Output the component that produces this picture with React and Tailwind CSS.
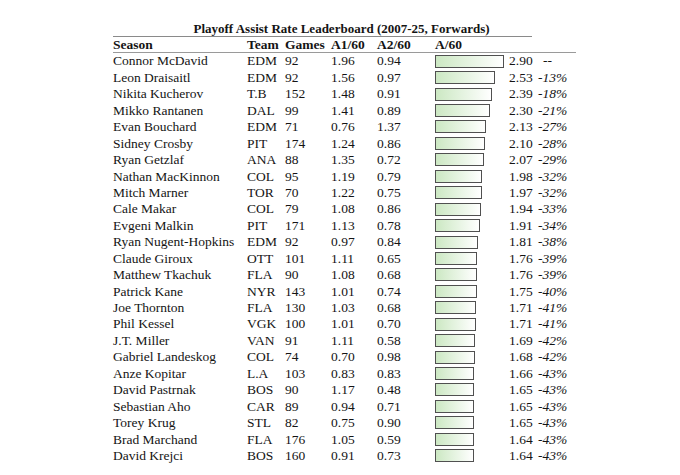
import React from "react";

const rows = [
  ["Connor McDavid", "EDM", "92", "1.96", "0.94", "2.90", "--"],
  ["Leon Draisaitl", "EDM", "92", "1.56", "0.97", "2.53", "-13%"],
  ["Nikita Kucherov", "T.B", "152", "1.48", "0.91", "2.39", "-18%"],
  ["Mikko Rantanen", "DAL", "99", "1.41", "0.89", "2.30", "-21%"],
  ["Evan Bouchard", "EDM", "71", "0.76", "1.37", "2.13", "-27%"],
  ["Sidney Crosby", "PIT", "174", "1.24", "0.86", "2.10", "-28%"],
  ["Ryan Getzlaf", "ANA", "88", "1.35", "0.72", "2.07", "-29%"],
  ["Nathan MacKinnon", "COL", "95", "1.19", "0.79", "1.98", "-32%"],
  ["Mitch Marner", "TOR", "70", "1.22", "0.75", "1.97", "-32%"],
  ["Cale Makar", "COL", "79", "1.08", "0.86", "1.94", "-33%"],
  ["Evgeni Malkin", "PIT", "171", "1.13", "0.78", "1.91", "-34%"],
  ["Ryan Nugent-Hopkins", "EDM", "92", "0.97", "0.84", "1.81", "-38%"],
  ["Claude Giroux", "OTT", "101", "1.11", "0.65", "1.76", "-39%"],
  ["Matthew Tkachuk", "FLA", "90", "1.08", "0.68", "1.76", "-39%"],
  ["Patrick Kane", "NYR", "143", "1.01", "0.74", "1.75", "-40%"],
  ["Joe Thornton", "FLA", "130", "1.03", "0.68", "1.71", "-41%"],
  ["Phil Kessel", "VGK", "100", "1.01", "0.70", "1.71", "-41%"],
  ["J.T. Miller", "VAN", "91", "1.11", "0.58", "1.69", "-42%"],
  ["Gabriel Landeskog", "COL", "74", "0.70", "0.98", "1.68", "-42%"],
  ["Anze Kopitar", "L.A", "103", "0.83", "0.83", "1.66", "-43%"],
  ["David Pastrnak", "BOS", "90", "1.17", "0.48", "1.65", "-43%"],
  ["Sebastian Aho", "CAR", "89", "0.94", "0.71", "1.65", "-43%"],
  ["Torey Krug", "STL", "82", "0.75", "0.90", "1.65", "-43%"],
  ["Brad Marchand", "FLA", "176", "1.05", "0.59", "1.64", "-43%"],
  ["David Krejci", "BOS", "160", "0.91", "0.73", "1.64", "-43%"],
];

const cols = "grid grid-cols-[134px_38px_46px_46px_58px_74px_29px_38px]";

export default function App() {
  return (
    <div
      className="w-[680px] h-[475px] bg-white text-[#141414] pt-[21px] pl-[113px]"
      style={{ fontFamily: '"Liberation Serif", "Times New Roman", serif' }}
    >
      <div className="w-[463px]">
        <div className="w-[457px] h-[15px] flex items-center justify-center text-[13px] font-bold leading-none whitespace-nowrap">
          Playoff Assist Rate Leaderboard (2007-25, Forwards)
        </div>
        <div className="w-[419px] h-px bg-[#8a8a8a]" />
        <div className={`${cols} h-[16px] items-center text-[13.5px] font-bold leading-none border-b border-[#9a9a9a]`}>
          <div>Season</div>
          <div>Team</div>
          <div>Games</div>
          <div>A1/60</div>
          <div>A2/60</div>
          <div>A/60</div>
          <div></div>
          <div></div>
        </div>
        {rows.map((r) => {
          const w = (parseFloat(r[5]) / 2.9) * 69;
          return (
            <div
              key={r[0]}
              className={`${cols} h-[16.44px] items-center text-[13.5px] leading-none whitespace-nowrap`}
            >
              <div>{r[0]}</div>
              <div>{r[1]}</div>
              <div>{r[2]}</div>
              <div>{r[3]}</div>
              <div>{r[4]}</div>
              <div className="flex items-center">
                <div
                  className="h-[13px] border border-[#505050] bg-gradient-to-r from-[#cce8c3] to-[#ffffff]"
                  style={{ width: `${w}px` }}
                />
              </div>
              <div>{r[5]}</div>
              <div className={r[6] === "--" ? "pl-[5px]" : "italic"}>{r[6]}</div>
            </div>
          );
        })}
      </div>
    </div>
  );
}
